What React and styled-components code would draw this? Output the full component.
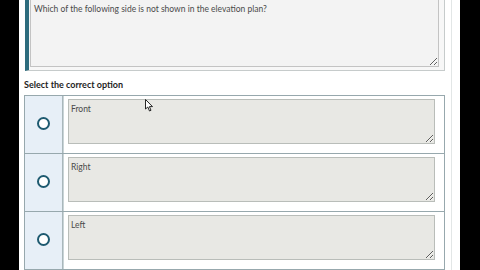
import styled, { createGlobalStyle } from 'styled-components'

const Global = createGlobalStyle`
    html, body {
        margin: 0;
        padding: 0;
        background: #000;
        overflow: hidden;
    }
    #root {
        height: 270px;
    }
`

const Page = styled.main`
    position: relative;
    margin: 0 20px 0 19px;
    height: 270px;
    background: #fff;
    overflow: hidden;
    font-family: Lato, "Open Sans", sans-serif;
`
const Content = styled.div`
    width: 421px;
    padding: 0 6px 0 5px;
    margin-top: -16px;
    border-right: 1px solid #e2e6e6;
    height: 300px;
`
const Question = styled.div`
    display: flex;
    height: 87px;
    padding: 3px 5px 3px 1px;
    border: 1px solid #c6cbcb;
    border-left: 4px solid #2d6c7d;
    background: #f7f7f7;
    box-sizing: border-box;
    margin-left: 1px;
`
const Field = styled.textarea`
    flex: 1;
    box-sizing: border-box;
    width: 100%;
    height: ${({ $h }) => $h}px;
    margin: 0;
    padding: ${({ $pad }) => $pad};
    border: 1px solid ${({ $border }) => $border};
    border-radius: 0;
    background: ${({ $bg }) => $bg};
    color: #4a4a4a;
    font-family: Lato, "Open Sans", sans-serif;
    font-size: 8.5px;
    line-height: 10px;
    outline: none;
    resize: both;
`
const Label = styled.h4`
    margin: 9px 0 0;
    height: 15px;
    font-size: 9px;
    font-weight: 700;
    color: #1e1e1e;
    line-height: 10px;
`
const Options = styled.div`
    border: 1px solid #97a8ad;
    border-bottom: none;
`
const Row = styled.div`
    display: grid;
    grid-template-columns: 38px 1fr;
    height: 58px;
    border-bottom: 1px solid #97a8ad;
    box-sizing: border-box;
`
const RadioCell = styled.div`
    display: flex;
    align-items: center;
    justify-content: center;
    background: #e7eff7;
    border-right: 1px solid #a9b7bb;
    padding-bottom: 2px;
`
const Radio = styled.span`
    width: 9px;
    height: 9px;
    border-radius: 50%;
    border: 2.5px solid #1e5a70;
    background: #fff;
`
const TextCell = styled.div`
    padding: 3px 9px 0 4px;
    border-left: 1px solid #c9d4d7;
`
const Cursor = styled.svg`
    position: absolute;
    left: 126px;
    top: 99px;
`

const options = ['Front', 'Right', 'Left']

const App = () => <>
    <Global />
    <Page>
        <Content>
            <Question>
                <Field readOnly $h={79} $pad="15px 3px 0 3px" $border="#c3c3c3" $bg="#f3f3f3"
                    defaultValue="Which of the following side is not shown in the elevation plan?" />
            </Question>
            <Label>Select the correct option</Label>
            <Options>
                {options.map(item => <Row key={item}>
                    <RadioCell><Radio /></RadioCell>
                    <TextCell>
                        <Field readOnly $h={45} $pad="4px 2px" $border="#b9bdb9" $bg="#e8e8e4" defaultValue={item} />
                    </TextCell>
                </Row>)}
            </Options>
        </Content>
        <Cursor width="9" height="13" viewBox="0 0 9 13">
            <path d="M0.5 0.5 L0.5 10 L2.8 8 L4.5 12 L6 11.3 L4.4 7.6 L7.5 7.6 Z" fill="#fff" stroke="#111" strokeWidth="0.9" strokeLinejoin="round" />
        </Cursor>
    </Page>
</>

export default App
